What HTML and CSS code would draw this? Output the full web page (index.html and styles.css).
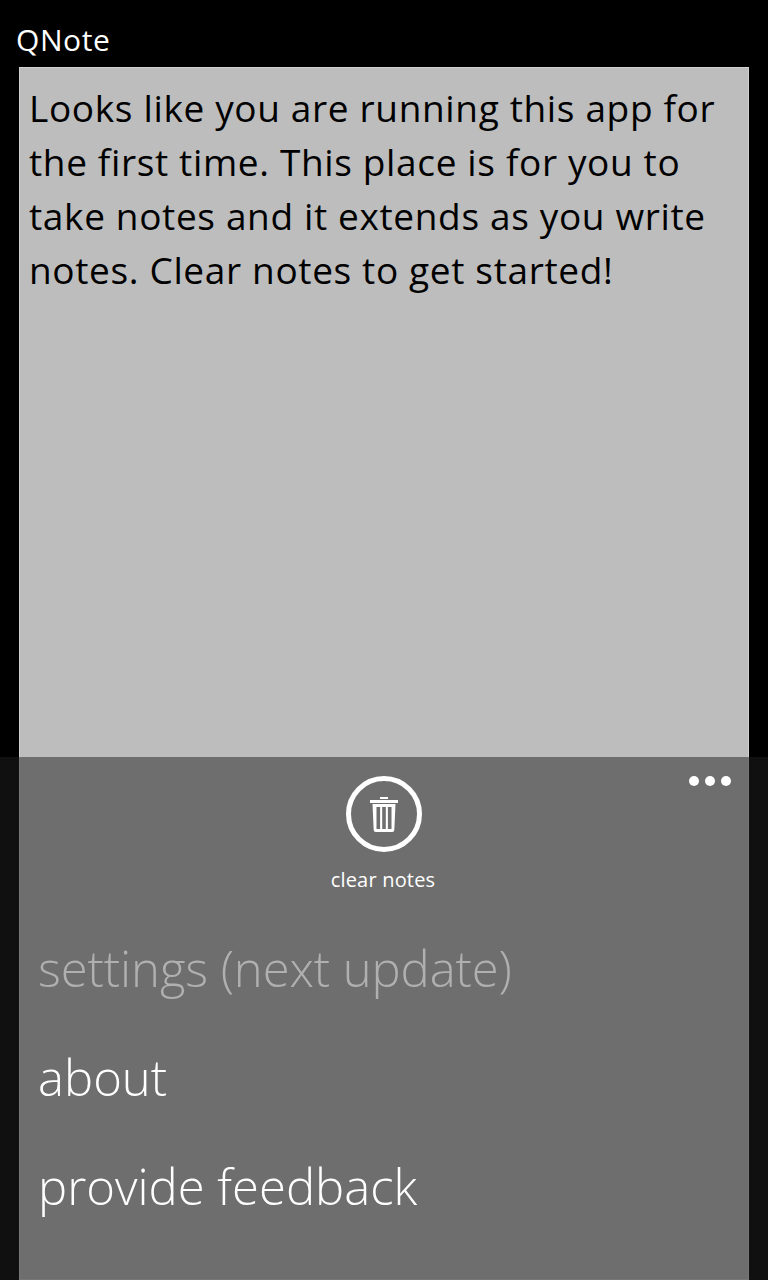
FILE: index.html
```html
<!DOCTYPE html>
<html lang="en">
<head>
    <meta charset="UTF-8">
    <meta name="viewport" content="width=device-width, initial-scale=1.0">
    <title>QNote</title>
    <link rel="stylesheet" href="styles.css">
</head>
<body>
    <div class="app">
        <div class="title">QNote</div>
        <div class="note">Looks like you are running this app for the first time. This place is for you to take notes and it extends as you write notes. Clear notes to get started!</div>
        <div class="appBar">
            <div class="dots"><span></span><span></span><span></span></div>
            <div class="action">
                <div class="circle">
                    <svg width="28" height="37" viewBox="0 0 28 37">
                        <path d="M10 2h8" stroke="#fff" stroke-width="2" fill="none"/>
                        <path d="M0 5.5h28" stroke="#fff" stroke-width="3" fill="none"/>
                        <path d="M2.5 8h23l-1.2 26a2 2 0 0 1-2 2H5.7a2 2 0 0 1-2-2z" fill="#fff"/>
                        <path d="M6.5 11h3.600v22h-3.600zM12.200 11h3.600v22h-3.600zM17.900 11h3.600v22h-3.600z" fill="#6e6e6e"/>
                    </svg>
                </div>
                <div class="label">clear notes</div>
            </div>
            <ul class="menu">
                <li class="disabled">settings (next update)</li>
                <li>about</li>
                <li>provide feedback</li>
            </ul>
        </div>
    </div>
</body>
</html>
```

FILE: styles.css
```css
*{
    margin: 0;
    padding: 0;
    box-sizing: border-box;
}
html, body{
    height: 100%;
    background-color: #000;
}
.app{
    width: 768px;
    height: 1280px;
    position: relative;
    overflow: hidden;
    font-family: "Open Sans", "Noto Sans", sans-serif;
    color: #fff;
}
.title{
    height: 67px;
    padding: 20px 0 0 16px;
    font-size: 30px;
    letter-spacing: 0.6px;
    line-height: 40px;
}
.note{
    margin-left: 19px;
    width: 730px;
    height: 1213px;
    padding: 13px 9px;
    border: 1px solid #cfcfcf;
    background-color: #bdbdbd;
    color: #000;
    font-size: 37px;
    letter-spacing: 0.65px;
    line-height: 54px;
}
.appBar{
    position: absolute;
    left: 0;
    right: 0;
    top: 757px;
    bottom: 0;
    padding: 0 19px;
    background-color: rgba(32, 32, 32, 0.5);
}
.dots{
    position: absolute;
    top: 19px;
    right: 37px;
    display: flex;
    gap: 6px;
}
.dots span{
    width: 10px;
    height: 10px;
    border-radius: 50%;
    background-color: #fff;
}
.action{
    display: flex;
    flex-direction: column;
    align-items: center;
    padding-top: 19px;
}
.circle{
    width: 76px;
    height: 76px;
    border: 5px solid #fff;
    border-radius: 50%;
    display: flex;
    align-items: center;
    justify-content: center;
}
.label{
    margin-top: 14px;
    margin-right: 2px;
    font-size: 20px;
    letter-spacing: 0.2px;
    line-height: 28px;
}
.menu{
    list-style: none;
    margin-top: 34px;
    padding-left: 19px;
}
.menu li{
    height: 109px;
    font-size: 49px;
    font-weight: 300;
    line-height: 80px;
}
.menu li.disabled{
    color: #b0b0b0;
    letter-spacing: -0.1px;
}
```
